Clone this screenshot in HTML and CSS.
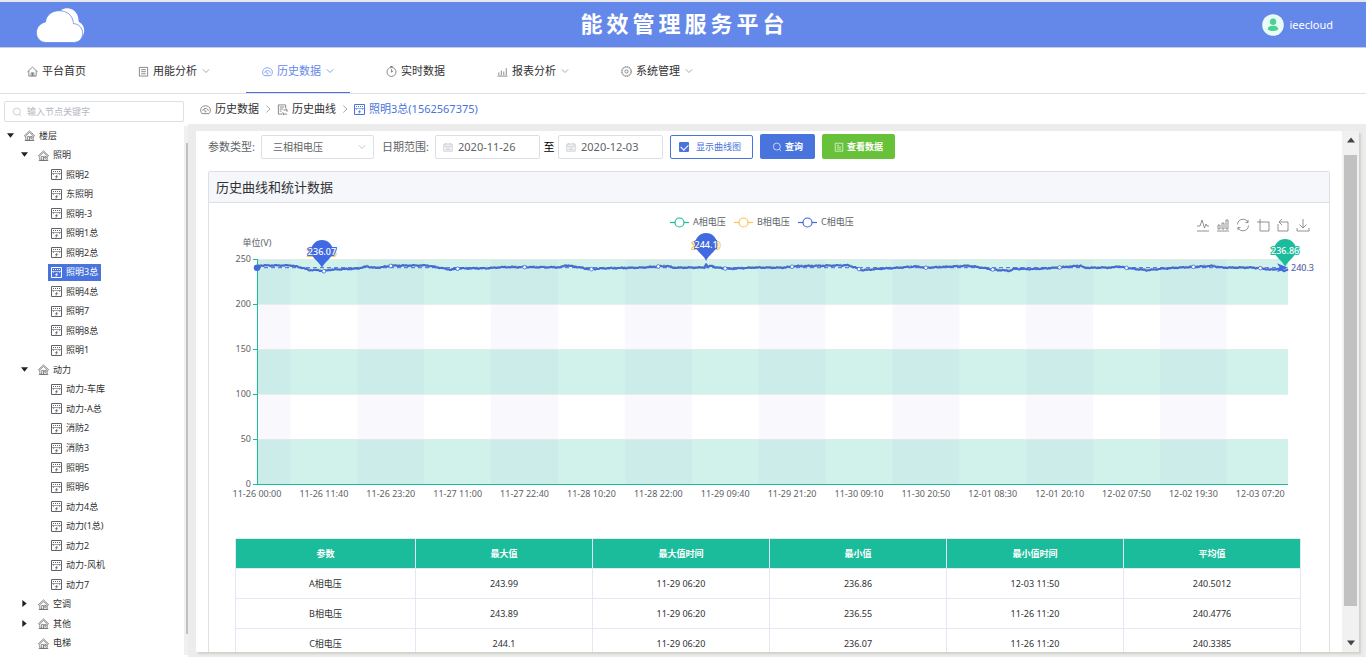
FILE: index.html
```html
<!DOCTYPE html>
<html lang="zh-CN">
<head>
    <meta charset="UTF-8">
    <title>能效管理服务平台</title>
    <link rel="stylesheet" href="styles.css">
</head>
<body>
    <svg class="sprite" aria-hidden="true">
        <symbol id="i-home" viewBox="0 0 12 12"><path d="M.5 6.400 6 1.200l5.500 5.200M2 5.200v5.800h8V5.200M4.500 11V7.500h3V11M6 7.500V11" /></symbol>
        <symbol id="i-doc" viewBox="0 0 12 12"><path d="M1.500 1.500h9v9.500h-9zM3.500 4h5M3.500 6.200h5M3.500 8.500h5" /></symbol>
        <symbol id="i-dash" viewBox="0 0 12 12"><path d="M2.200 10.500C-.8 7 .8 2 6 2s6.800 5 3.800 8.500zM3 7.500C3 4 9 4 9 7.500M6 8 4.500 5.800M5 8.500h2" /></symbol>
        <symbol id="i-clock" viewBox="0 0 12 12"><circle cx="6" cy="6.500" r="4.900" /><path d="M6 3.500v3.300l1.800-1.500M4.500.5h3M6 .5v1.200" /></symbol>
        <symbol id="i-bars" viewBox="0 0 12 12"><path d="M.5 11h11M2 10V7M4.700 10V5M7.400 10V6M10.100 10V2.500" /></symbol>
        <symbol id="i-gear" viewBox="0 0 12 12"><circle cx="6" cy="6" r="5.500" stroke-dasharray="1.400 .76" /><circle cx="6" cy="6" r="4.600" stroke-width=".5" /><circle cx="6" cy="6" r="1.700" /></symbol>
        <symbol id="i-down" viewBox="0 0 8 8"><path d="M.8 2.300 4 5.500l3.200-3.200" /></symbol>
        <symbol id="i-right" viewBox="0 0 8 8"><path d="M2.300.5 6 4 2.300 7.500" /></symbol>
        <symbol id="i-search" viewBox="0 0 12 12"><circle cx="5.800" cy="5.500" r="4.200" /><path d="m8.800 8.600 2 2.400" /></symbol>
        <symbol id="i-check-doc" viewBox="0 0 12 12"><path d="M1.500 1.500h9v9.500h-9zM3.500 4h2.500M3.500 6.200h5M3.500 8.500h5" /></symbol>
        <symbol id="i-date" viewBox="0 0 12 12"><path d="M1 2.500h10v8.500H1zM1 5h10M3 7h6M3 9h6M3.500 1v2M8.500 1v2" /></symbol>
        <symbol id="i-curve" viewBox="0 0 12 12"><path d="M9.500 4.500V1h-8v10h4M3 3.300h5M3 5.500h3.500M3 7.700h2M7 6.500h4v2M9.500 5 11 6.500M11 11H6.500V9M8 12.200 6.500 11" /></symbol>
        <symbol id="i-house" viewBox="0 0 12 12"><path d="M.4 6.300 6 1l5.600 5.300-1 .6L6 2.600 1.400 6.900zM2 7v4.200h8V7M4 11V7h2v4M7.300 7h1.500v2H7.300zM.8 11.500h10.400" /></symbol>
        <symbol id="i-meter" viewBox="0 0 11 11"><path d="M.5.5h10v10H.5z" stroke-width="1" /><path d="M2 2.500h7" stroke-dasharray="1 1" stroke-width="1" /><path d="M1 4.500h9M2.500 4.500V6M8.500 4.500V6" stroke-width=".6" /><path d="M6.200 5.800 4.200 7.900h1.300L4.800 9.700l2-2.200H5.600z" fill="currentColor" stroke-width=".3" /></symbol>
        <symbol id="i-caret" viewBox="0 0 8 8"><path d="M0 1.500h8L4 6.500z" /></symbol>
        <symbol id="i-caret-r" viewBox="0 0 8 8"><path d="M1.500 0v8L6.500 4z" /></symbol>
    </svg>

    <header class="top">
        <svg class="logo" viewBox="0 0 49 35">
            <path d="M25 2c7-4 16-1 17.500 9-.3 1.500 0 2 .5 3 6 3 7 11 2 16z" fill="#fff" />
            <path d="M10.500 34.500C-2 34.500-3.500 17 9.500 14 11 0 32-1 36.500 11c.6 2 .8 3 .8 4.500 12.500 1 12.500 19 .2 19z" fill="#fff" stroke="#6488ea" />
        </svg>
        <h1 class="title">能效管理服务平台</h1>
        <div class="user">
            <svg class="avatar" viewBox="0 0 22 22"><circle cx="11" cy="11" r="10.800" fill="#eafaf4" /><circle cx="11" cy="7.800" r="3.200" fill="#46d394" /><path d="M5.800 15c0-4.500 10.400-4.500 10.400 0 0 2.600-10.400 2.600-10.400 0z" fill="#46d394" /></svg>
            <span>ieecloud</span>
        </div>
    </header>

    <nav class="menu">
        <a class="menu-item" href="#"><svg class="icon"><use href="#i-home" /></svg>平台首页</a>
        <a class="menu-item" href="#"><svg class="icon"><use href="#i-doc" /></svg>用能分析<svg class="arrow"><use href="#i-down" /></svg></a>
        <a class="menu-item active" href="#"><svg class="icon"><use href="#i-dash" /></svg>历史数据<svg class="arrow"><use href="#i-down" /></svg></a>
        <a class="menu-item" href="#"><svg class="icon"><use href="#i-clock" /></svg>实时数据</a>
        <a class="menu-item" href="#"><svg class="icon"><use href="#i-bars" /></svg>报表分析<svg class="arrow"><use href="#i-down" /></svg></a>
        <a class="menu-item" href="#"><svg class="icon"><use href="#i-gear" /></svg>系统管理<svg class="arrow"><use href="#i-down" /></svg></a>
    </nav>

    <div class="content">
        <aside class="side">
            <div class="side-main">
                <label class="search">
                    <svg class="icon-s"><use href="#i-search" /></svg>
                    <input type="text" placeholder="输入节点关键字" aria-label="输入节点关键字">
                </label>
                <ul class="tree" id="tree"></ul>
            </div>
            <div class="side-scroll"><div class="side-thumb"></div></div>
        </aside>

        <main class="main">
            <div class="crumbs">
                <a href="#"><svg class="icon"><use href="#i-dash" /></svg>历史数据</a>
                <svg class="sep"><use href="#i-right" /></svg>
                <a href="#"><svg class="icon"><use href="#i-curve" /></svg>历史曲线</a>
                <svg class="sep"><use href="#i-right" /></svg>
                <a class="current" href="#"><svg class="icon"><use href="#i-meter" /></svg>照明3总(1562567375)</a>
            </div>
            <div class="stage">
                <div class="card">
                    <div class="card-body">
                        <form class="filter">
                            <label class="filter-label" for="type">参数类型:</label>
                            <div class="select-box">
                                <select id="type"><option>三相相电压</option></select>
                                <svg class="arrow"><use href="#i-down" /></svg>
                            </div>
                            <label class="filter-label" for="start">日期范围:</label>
                            <div class="date-box">
                                <svg class="icon-s"><use href="#i-date" /></svg>
                                <input id="start" type="text" value="2020-11-26">
                            </div>
                            <label class="to" for="end">至</label>
                            <div class="date-box">
                                <svg class="icon-s"><use href="#i-date" /></svg>
                                <input id="end" type="text" value="2020-12-03">
                            </div>
                            <label class="check-btn"><input type="checkbox" checked>显示曲线图</label>
                            <button type="button" class="btn btn-primary"><svg class="icon-s"><use href="#i-search" /></svg>查询</button>
                            <button type="button" class="btn btn-success"><svg class="icon-s"><use href="#i-check-doc" /></svg>查看数据</button>
                        </form>

                        <section class="panel">
                            <h2 class="panel-title">历史曲线和统计数据</h2>
                            <svg class="chart" id="chart"></svg>
                            <table class="stat">
                                <thead>
                                    <tr><th>参数</th><th>最大值</th><th>最大值时间</th><th>最小值</th><th>最小值时间</th><th>平均值</th></tr>
                                </thead>
                                <tbody>
                                    <tr><td>A相电压</td><td>243.99</td><td>11-29 06:20</td><td>236.86</td><td>12-03 11:50</td><td>240.5012</td></tr>
                                    <tr><td>B相电压</td><td>243.89</td><td>11-29 06:20</td><td>236.55</td><td>11-26 11:20</td><td>240.4776</td></tr>
                                    <tr><td>C相电压</td><td>244.1</td><td>11-29 06:20</td><td>236.07</td><td>11-26 11:20</td><td>240.3385</td></tr>
                                </tbody>
                            </table>
                        </section>
                    </div>
                    <div class="card-scroll">
                        <svg class="scroll-arrow up"><use href="#i-caret" /></svg>
                        <div class="card-thumb"></div>
                        <svg class="scroll-arrow"><use href="#i-caret" /></svg>
                    </div>
                </div>
            </div>
        </main>
    </div>
    <script src="main.js"></script>
</body>
</html>
```
FILE: styles.css
```css
* {
    box-sizing: border-box;
}

html, body {
    margin: 0;
    padding: 0;
    width: 100%;
    height: 100%;
}

body {
    display: flex;
    flex-direction: column;
    overflow: hidden;
    background: #fff;
    color: #303133;
    font-family: "Noto Sans", "Noto Sans CJK SC", sans-serif;
    font-size: 11px;
    line-height: 16px;
}

input, select, button {
    font-family: inherit;
    color: inherit;
    margin: 0;
}

a {
    color: inherit;
    text-decoration: none;
}

svg {
    flex: none;
    fill: none;
    stroke: currentColor;
    stroke-width: 0.8;
}

.sprite {
    position: absolute;
    width: 0;
    height: 0;
}

.icon {
    width: 11px;
    height: 11px;
    color: #606266;
}

.icon-s {
    width: 10px;
    height: 10px;
    color: #b4b8c0;
}

.arrow {
    width: 8px;
    height: 8px;
    color: #909399;
}

/* header */
.top {
    flex: none;
    display: grid;
    grid-template-columns: 1fr auto 1fr;
    align-items: center;
    height: 48px;
    padding: 0 33px 0 36px;
    border-top: 2px solid #e8e8ea;
    border-bottom: 1px solid #c9cde0;
    background: #6488ea;
    color: #fff;
}

.logo {
    width: 49px;
    height: 35px;
    margin-top: 2px;
    stroke: none;
}

.title {
    margin: 0;
    padding-bottom: 4px;
    font-size: 22px;
    line-height: 32px;
    font-weight: bold;
    letter-spacing: 4px;
}

.user {
    justify-self: end;
    display: flex;
    align-items: center;
    gap: 5px;
}

.avatar {
    width: 22px;
    height: 22px;
    stroke: none;
}

/* menu */
.menu {
    flex: none;
    display: flex;
    gap: 20px;
    height: 46px;
    padding-left: 11px;
    border-bottom: 1px solid #e0e1e4;
}

.menu-item {
    display: flex;
    align-items: center;
    gap: 4px;
    padding: 2px 16px 0;
    border-bottom: 1px solid transparent;
}

    .menu-item .arrow {
        margin-left: 1px;
    }

    .menu-item.active,
    .menu-item.active .icon,
    .menu-item.active .arrow {
        color: #6488ea;
    }

    .menu-item.active {
        border-bottom-color: #4a74dd;
    }

.content {
    flex: 1;
    display: flex;
    min-height: 0;
}

/* tree */
.side {
    flex: none;
    display: flex;
    width: 188px;
}

.side-main {
    flex: 1;
    display: flex;
    flex-direction: column;
    padding: 7px 0 4px 4px;
}

.search {
    flex: none;
    display: flex;
    align-items: center;
    gap: 5px;
    width: 180px;
    height: 21px;
    padding: 0 7px;
    border: 1px solid #dcdfe6;
    border-radius: 2px;
}

    .search input {
        flex: 1;
        min-width: 0;
        padding: 0;
        border: none;
        outline: none;
        background: none;
        font-size: 9px;
    }

    .search input::placeholder {
        color: #b4b8c2;
    }

.tree {
    flex: 1;
    display: flex;
    flex-direction: column;
    margin: 4px 0 0;
    padding: 0;
    list-style: none;
    font-size: 9px;
}

.node {
    flex: 1;
    display: flex;
    align-items: center;
}

.level-0 {
    padding-left: 3px;
}

.level-1 {
    padding-left: 17px;
}

.level-2 {
    padding-left: 30px;
}

.caret {
    flex: none;
    width: 14px;
    height: 16px;
}

    .caret svg {
        width: 7px;
        height: 7px;
        fill: #222;
        stroke: none;
    }

.node-label {
    display: flex;
    align-items: center;
    gap: 4px;
    height: 17px;
    padding: 0 3px;
}

    .node-label.selected,
    .node-label.selected .icon {
        background: #4a74dd;
        color: #fff;
    }

.side-scroll {
    flex: none;
    width: 5px;
    margin: 32px 0 2px;
    padding: 17px 0 21px 2px;
    background: #f0f0f0;
}

.side-thumb {
    height: 100%;
    background: #c1c1c1;
}

/* main */
.main {
    flex: 1;
    display: flex;
    flex-direction: column;
    min-width: 0;
}

.crumbs {
    flex: none;
    display: flex;
    align-items: center;
    gap: 5px;
    height: 30px;
    padding-left: 12px;
}

    .crumbs a {
        display: flex;
        align-items: center;
        gap: 4px;
    }

    .crumbs .current,
    .crumbs .current .icon {
        color: #4a74dd;
    }

.sep {
    width: 8px;
    height: 8px;
    color: #909399;
}

.stage {
    flex: 1;
    display: flex;
    min-height: 0;
    padding: 7px 7px 5px 8px;
    background: #ececec;
}

.card {
    flex: 1;
    display: flex;
    min-width: 0;
    background: #fff;
    box-shadow: 2px 2px 2px #cfd0c8;
}

.card-body {
    flex: 1;
    min-width: 0;
    overflow: hidden;
    padding: 3px 12px 0;
}

.card-scroll {
    flex: none;
    display: flex;
    flex-direction: column;
    align-items: center;
    width: 17px;
    padding: 5px 2px;
    background: #f1f1f1;
}

.scroll-arrow {
    width: 8px;
    height: 8px;
    fill: #444;
    stroke: none;
}

    .scroll-arrow.up {
        transform: rotate(180deg);
    }

.card-thumb {
    flex: 1;
    width: 13px;
    margin: 11px 0 33px;
    background: #c1c1c1;
}

.filter {
    display: flex;
    align-items: center;
    height: 25px;
}

.filter-label {
    width: 53px;
    color: #606266;
    white-space: nowrap;
}

.select-box {
    position: relative;
    width: 113px;
    margin-right: 8px;
}

    .select-box select {
        display: block;
        width: 100%;
        height: 24px;
        padding: 0 11px;
        border: 1px solid #dcdfe6;
        border-radius: 2px;
        background: #fff;
        font-size: 10px;
        color: #606266;
        appearance: none;
    }

    .select-box .arrow {
        position: absolute;
        right: 8px;
        top: 8px;
        color: #b4b8c2;
    }

.date-box {
    display: flex;
    align-items: center;
    gap: 5px;
    width: 105px;
    height: 24px;
    padding: 0 7px;
    border: 1px solid #dcdfe6;
    border-radius: 2px;
}

    .date-box input {
        flex: 1;
        min-width: 0;
        padding: 0;
        border: none;
        outline: none;
        background: none;
        font-size: 11px;
        color: #606266;
    }

.to {
    width: 18px;
    text-align: center;
    color: #000;
}

.check-btn {
    display: flex;
    align-items: center;
    gap: 7px;
    height: 24px;
    margin-left: 7px;
    padding: 0 11px 0 8px;
    border: 1px solid #4a74dd;
    border-radius: 2px;
    font-size: 9px;
    color: #4a74dd;
    white-space: nowrap;
}

    .check-btn input {
        position: relative;
        width: 10px;
        height: 10px;
        border-radius: 1px;
        background: #4a74dd;
        appearance: none;
    }

    .check-btn input:checked::after {
        content: "";
        position: absolute;
        left: 3px;
        top: 1px;
        width: 4px;
        height: 6px;
        border: solid #fff;
        border-width: 0 1px 1px 0;
        transform: rotate(45deg);
    }

.btn {
    display: flex;
    align-items: center;
    gap: 3px;
    height: 25px;
    margin-left: 7px;
    padding: 0 12px;
    border: none;
    border-radius: 2px;
    font-size: 9px;
    font-weight: bold;
    color: #fff;
}

    .btn .icon-s {
        color: #fff;
    }

.btn-primary {
    background: #4a74dd;
}

.btn-success {
    background: #67c23a;
}

.panel {
    margin-top: 12px;
    border: 1px solid #dcdfe6;
    border-radius: 2px;
}

.panel-title {
    height: 31px;
    margin: 0;
    padding: 0 7px;
    border-bottom: 1px solid #dcdfe6;
    background: #f5f7fb;
    font-size: 13px;
    line-height: 30px;
    font-weight: normal;
}

.chart {
    display: block;
    width: 100%;
    height: 335px;
    font-size: 9px;
}

    .chart text {
        stroke: none;
        fill: #606266;
    }

    .chart .tag {
        fill: #fff;
        stroke-width: 2px;
        paint-order: stroke;
        font-weight: 500;
    }

.stat {
    width: calc(100% - 54px);
    margin: 0 28px 26px 26px;
    border-collapse: collapse;
    table-layout: fixed;
    font-size: 9px;
    text-align: center;
}

    .stat th,
    .stat td {
        height: 30px;
        padding: 0;
        border: 1px solid #e4e8f5;
    }

    .stat th {
        background: #1bbc9b;
        color: #fff;
        font-weight: bold;
    }

    .stat th:first-child {
        width: 180px;
    }
```
FILE: main.js
```javascript
(function () {

    // [level, name, caret]
    var nodes = [
        [0, "楼层", "open"],
        [1, "照明", "open"],
        [2, "照明2"], [2, "东照明"], [2, "照明-3"], [2, "照明1总"], [2, "照明2总"],
        [2, "照明3总"], [2, "照明4总"], [2, "照明7"], [2, "照明8总"], [2, "照明1"],
        [1, "动力", "open"],
        [2, "动力-车库"], [2, "动力-A总"], [2, "消防2"], [2, "消防3"], [2, "照明5"], [2, "照明6"],
        [2, "动力4总"], [2, "动力(1总)"], [2, "动力2"], [2, "动力-风机"], [2, "动力7"],
        [1, "空调", "close"], [1, "其他", "close"], [1, "电梯"]
    ];
    var current = "照明3总";

    function renderTree() {
        document.getElementById("tree").innerHTML = nodes.map(function (n) {
            var caret = "";
            if (n[2] == "open") caret = '<svg><use href="#i-caret"/></svg>';
            if (n[2] == "close") caret = '<svg><use href="#i-caret-r"/></svg>';
            return '<li class="node level-' + n[0] + '"><span class="caret">' + caret + '</span>' +
                '<span class="node-label' + (n[1] == current ? ' selected' : '') + '">' +
                '<svg class="icon"><use href="#' + (n[0] == 2 ? 'i-meter' : 'i-house') + '"/></svg>' + n[1] + '</span></li>';
        }).join("");
    }

    var GREEN = "#1bbc9b", YELLOW = "#f7c653", BLUE = "#4169e1";
    var TOTAL = 1079, STEP = 70;
    var labels = ["11-26 00:00", "11-26 11:40", "11-26 23:20", "11-27 11:00", "11-27 22:40", "11-28 10:20",
        "11-28 22:00", "11-29 09:40", "11-29 21:20", "11-30 09:10", "11-30 20:50", "12-01 08:30",
        "12-01 20:10", "12-02 07:50", "12-02 19:30", "12-03 07:20"];

    // [sample index, voltage]
    var keys = [[0, 242], [4, 242.8], [36, 242.8], [48, 240], [54, 237.8], [66, 237.4], [69, 236.1], [76, 238], [105, 239.3],
        [115, 241.8], [124, 240], [142, 242.6], [178, 242.8], [190, 240.5], [203, 238], [212, 239.5], [240, 239.6], [258, 241],
        [318, 240.8], [323, 243], [336, 241], [348, 238.5], [362, 239.6], [400, 240.3], [429, 242.3], [436, 240.3], [468, 240.5],
        [470, 244.1], [472, 241], [476, 242.5], [480, 240.6], [494, 239], [520, 240.5], [550, 240.3], [565, 242], [618, 243],
        [625, 241], [633, 237.5], [650, 239], [668, 240], [690, 241.8], [700, 240.3], [745, 242.5], [757, 240.5], [772, 238],
        [788, 236.9], [792, 239], [812, 238.7], [838, 240.4], [862, 242.6], [866, 240.2], [896, 240.5], [900, 241.8], [914, 239.5],
        [932, 237.5], [945, 239], [966, 240.5], [1000, 242.3], [1010, 240.4], [1040, 240.5], [1050, 239.8],
        [1060, 238], [1068, 239], [1075, 236.9], [1079, 238.5]];

    function valueAt(i) {
        for (var k = 1; k < keys.length; k++) {
            if (i <= keys[k][0]) {
                var a = keys[k - 1], b = keys[k];
                return a[1] + (b[1] - a[1]) * (i - a[0]) / (b[0] - a[0]);
            }
        }
        return keys[keys.length - 1][1];
    }

    function text(x, y, s, anchor, attr) {
        return '<text x="' + x + '" y="' + y + '" text-anchor="' + (anchor || "middle") + '" ' + (attr || "") + '>' + s + '</text>';
    }

    function line(x1, y1, x2, y2, color, attr) {
        return '<path d="M' + x1 + ' ' + y1 + 'L' + x2 + ' ' + y2 + '" stroke="' + color + '" ' + (attr || "") + '/>';
    }

    function rect(x, y, w, h, color) {
        return '<rect x="' + x + '" y="' + y + '" width="' + w + '" height="' + h + '" fill="' + color + '" stroke="none"/>';
    }

    function pin(x, y, s, color, under) {
        return (under ? text(x, y - 12, under, "middle", 'class="tag" style="stroke:' + YELLOW + '"') : "") +
            '<path transform="translate(' + x + ' ' + y + ')" d="M0 0C-2-6-11-10-11-17A11 11 0 0 1 11-17C11-10 2-6 0 0z" fill="' + color + '" stroke="none"/>' +
            text(x, y - 13, s, "middle", 'class="tag" style="stroke:' + color + '"');
    }

    function renderChart() {
        var svg = document.getElementById("chart");
        var left = 48, top = 56, height = 225, bottom = top + height;
        var right = svg.clientWidth - 41, width = right - left;
        var px = function (i) { return left + width * i / TOTAL; };
        var py = function (v) { return bottom - height * v / 250; };
        var html = "", i, x, y;

        // vertical split area
        for (i = 0; i < labels.length; i += 2) {
            x = Math.max(left, px(i * STEP - STEP / 2));
            html += rect(x, top, px(i * STEP + STEP / 2) - x, height, "#f9f8fd");
        }
        // horizontal split area
        for (i = 0; i < 250; i += 100) {
            html += rect(left, py(i + 50), width, height / 5, "rgba(27,188,155,.2)");
        }
        for (i = 0; i <= 250; i += 50) {
            y = py(i) + 0.5;
            if (i) html += line(left, y, right, y, "#e6e9ec");
            html += line(left - 4, y, left, y, GREEN, 'stroke-width="1"');
            html += text(left - 6, y + 2, i, "end");
        }
        html += line(left + 0.5, top, left + 0.5, bottom, GREEN, 'stroke-width="1"');
        html += line(left, bottom + 0.5, right, bottom + 0.5, GREEN, 'stroke-width="1"');
        labels.forEach(function (s, n) {
            html += text(px(n * STEP), bottom + 13, s);
        });
        html += text(left, 43, "单位(V)");

        // series, lowest first
        [[GREEN, 0.3], [YELLOW, 0.5], [BLUE, 0]].forEach(function (s, n) {
            var d = "";
            for (i = 0; i <= TOTAL; i++) {
                var noise = Math.sin(i * 1.7) * 0.3 + Math.sin(i * 0.61 + n) * 0.4;
                d += (i ? "L" : "M") + px(i).toFixed(1) + " " + py(valueAt(i) + s[1] + noise).toFixed(1);
            }
            html += '<path d="' + d + '" stroke="' + s[0] + '" stroke-width="' + (s[0] == BLUE ? 2 : 1.5) + '" stroke-linejoin="round"/>';
        });
        y = py(240.34);
        html += line(left, y, right - 6, y, BLUE, 'stroke-width="1" stroke-dasharray="4 3"');
        for (i = STEP; i < TOTAL; i += STEP) {
            html += '<circle cx="' + px(i) + '" cy="' + py(valueAt(i)) + '" r="1.8" fill="#fff" stroke="' + BLUE + '"/>';
        }
        html += '<circle cx="' + left + '" cy="' + y + '" r="3.3" fill="' + BLUE + '" stroke="none"/>';
        html += '<path transform="translate(' + right + ' ' + y + ')" d="M0 0-11-4.5-8 0-11 4.5z" fill="' + BLUE + '" stroke="none"/>';
        html += text(right + 3, y + 3, "240.5", "start", 'style="fill:' + YELLOW + '"');
        html += text(right + 3, y + 3, "240.3", "start", 'style="fill:' + BLUE + '"');

        html += pin(px(68), 65, "236.07", BLUE, "236.55");
        html += pin(px(470), 58, "244.1", BLUE, "243.89");
        html += pin(px(1076), 64, "236.86", GREEN);

        // legend
        x = svg.clientWidth / 2 - 99;
        [["A相电压", GREEN], ["B相电压", YELLOW], ["C相电压", BLUE]].forEach(function (s, n) {
            var lx = x + n * 64;
            html += line(lx, 19.5, lx + 19, 19.5, s[1], 'stroke-width="1.2"');
            html += '<circle cx="' + (lx + 9.5) + '" cy="19.5" r="4.5" fill="#fff" stroke="' + s[1] + '" stroke-width="1.2"/>';
            html += text(lx + 23, 22, s[0], "start");
        });

        // toolbox
        var tools = [
            "M0 12h12M0 7h3l2-6 2.500 8 1.500-4 1 2h2",
            "M0 12h12M1 10V6h2v4zM5 10V4h2v6zM9 10V1h2v9z",
            "M.5 5.500a5.500 5.500 0 0 1 10.500-2M11.500 6.500a5.500 5.500 0 0 1-10.500 2M11 .8v2.800H8.500M1 11.200V8.500h2.500",
            "M0 3h12v9H3V0",
            "M1 5v7h10V3H2M5 0 2 3l3 3",
            "M0 9v3h12V9M6 0v9M2.500 5.500 6 9l3.500-3.500"
        ];
        tools.forEach(function (d, n) {
            html += '<path transform="translate(' + (svg.clientWidth - 132 + n * 20) + ' 16)" d="' + d + '" stroke="#777"/>';
        });

        svg.innerHTML = html;
    }

    renderTree();
    renderChart();
    window.addEventListener("resize", renderChart);
})();
```
